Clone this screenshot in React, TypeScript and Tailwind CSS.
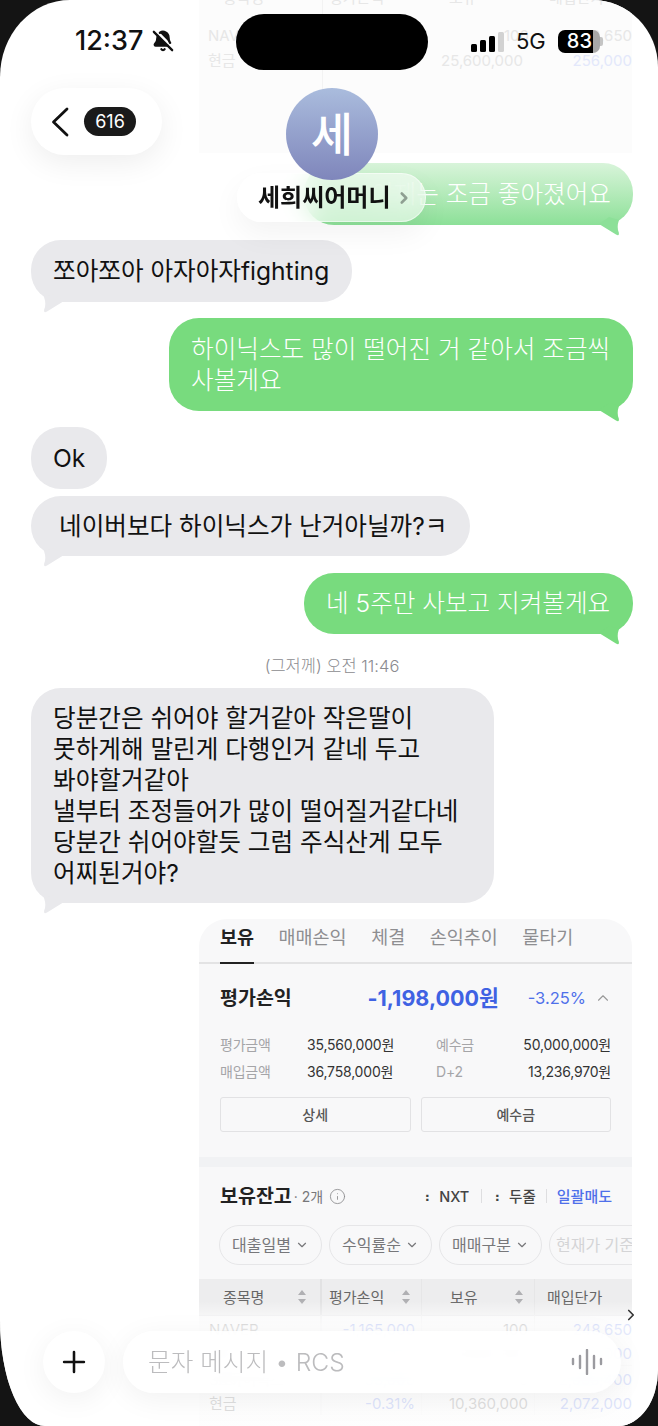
import React from 'react';
import { ChevronDown, ChevronRight, ChevronUp, Info, Plus, BellOff } from 'lucide-react';

const Tail: React.FC<{ side: 'left' | 'right'; color: string }> = ({ side, color }) => (
    <svg
        viewBox="0 0 22 19"
        className={side === 'right' ? 'absolute right-[12px] bottom-[-11px] w-[22px] h-[19px]' : 'absolute left-[11px] bottom-[-11px] w-[22px] h-[19px] -scale-x-100'}
        fill={color}
    >
        <path d="M0 7 L17 17.5 Q20.5 19.5 19.8 15.5 Q17.5 10 20 3 L10 0 Z" />
    </svg>
);

const Incoming: React.FC<{ children: React.ReactNode; className?: string; noTail?: boolean }> = ({ children, className = '', noTail }) => (
    <div className={`relative self-start rounded-[30px] bg-[#e9e9ec] px-[22px] text-[#111] ${className}`}>
        {children}
        {!noTail && <Tail side="left" color="#e9e9ec" />}
    </div>
);

const Outgoing: React.FC<{ children: React.ReactNode; className?: string }> = ({ children, className = '' }) => (
    <div className={`relative self-end rounded-[30px] bg-[#78db7e] px-[22px] text-white font-light ${className}`}>
        {children}
        <Tail side="right" color="#78db7e" />
    </div>
);

const SortIcon = () => (
    <svg viewBox="0 0 8 14" className="w-[8px] h-[14px]" fill="#b0b0b3">
        <path d="M4 0 L8 5 H0 Z M4 14 L0 9 H8 Z" />
    </svg>
);

const Pill: React.FC<{ label: string; className?: string }> = ({ label, className = '' }) => (
    <div className={`h-[40px] rounded-full border border-[#e6e6e8] flex items-center justify-center gap-[4px] text-[16px] text-[#77777a] shrink-0 whitespace-nowrap ${className}`}>
        {label}
        <ChevronDown size={14} strokeWidth={2} />
    </div>
);

const HoldingsCard = () => (
    <div className="self-end w-[433px] h-[560px] mt-[16px] mr-[1px] rounded-t-[28px] bg-[#f8f8f9] overflow-hidden text-[#333]">
        <div className="h-[45px] flex items-start gap-[24.5px] pl-[21px] pt-[3px] border-b-2 border-[#e3e3e4] text-[18.5px] text-[#8e8e91]">
            <div className="relative h-[42px] font-bold text-[#222]">
                보유
                <div className="absolute left-0 right-0 bottom-0 h-[2px] bg-[#222]" />
            </div>
            <span>매매손익</span>
            <span>체결</span>
            <span>손익추이</span>
            <span>물타기</span>
        </div>

        <div className="h-[203px] border-b-[10px] border-[#f1f2f4] px-[21px] pt-[19px]">
            <div className="flex items-center h-[30px]">
                <span className="text-[19.5px] font-bold text-[#222]">평가손익</span>
                <span className="ml-auto text-[21.5px] font-bold text-[#3f62e3]">-1,198,000원</span>
                <span className="ml-[29px] text-[16.5px] text-[#4f70ea]">-3.25%</span>
                <ChevronUp size={18} strokeWidth={1.5} className="ml-[8px] mr-[-1px] text-[#999]" />
            </div>
            <div className="mt-[18px] grid grid-cols-[87px_84px_45px_1fr] text-[14px] leading-[27px] tracking-[-0.2px] whitespace-nowrap">
                <span className="text-[#a5a5a8]">평가금액</span>
                <span className="text-right text-[#333]">35,560,000원</span>
                <span className="pl-[45px] w-[100px] text-[#a5a5a8]">예수금</span>
                <span className="text-right text-[#333]">50,000,000원</span>
                <span className="text-[#a5a5a8]">매입금액</span>
                <span className="text-right text-[#333]">36,758,000원</span>
                <span className="pl-[45px] w-[100px] text-[#a5a5a8]">D+2</span>
                <span className="text-right text-[#333]">13,236,970원</span>
            </div>
            <div className="mt-[12px] flex gap-[10px]">
                <div className="flex-1 h-[35px] rounded-[3px] border border-[#e2e2e4] flex items-center justify-center text-[14px] font-medium text-[#555]">상세</div>
                <div className="flex-1 h-[35px] rounded-[3px] border border-[#e2e2e4] flex items-center justify-center text-[14px] font-medium text-[#555]">예수금</div>
            </div>
        </div>

        <div className="flex items-center h-[30px] mt-[14px] pl-[21px] pr-[20px]">
            <span className="text-[19.5px] font-bold text-[#222]">보유잔고</span>
            <span className="ml-[2px] text-[14px] text-[#77777a]">· 2개</span>
            <Info size={17} strokeWidth={1.2} className="ml-[6px] text-[#8a8a8d]" />
            <span className="ml-auto text-[14.5px] font-medium text-[#444]">⠆ NXT</span>
            <span className="mx-[12px] h-[14px] w-px bg-[#dedee0]" />
            <span className="text-[14.5px] font-medium text-[#444]">⠆ 두줄</span>
            <span className="mx-[10px] h-[14px] w-px bg-[#dedee0]" />
            <span className="text-[15px] font-medium text-[#4f70ea]">일괄매도</span>
        </div>

        <div className="flex gap-[7px] mt-[14px] pl-[20px] overflow-hidden">
            <Pill label="대출일별" className="w-[103px]" />
            <Pill label="수익률순" className="w-[103px]" />
            <Pill label="매매구분" className="w-[103px]" />
            <Pill label="현재가 기준" className="w-[110px] text-[#d4d4d6]" />
        </div>

        <div className="mt-[14px] grid grid-cols-[123px_100px_113px_1fr] text-[15px]">
            <div className="h-[36px] bg-[#ededee] border-r-2 border-[#e2e2e3] flex items-center justify-between pl-[24px] pr-[14px] text-[#666]">종목명<SortIcon /></div>
            <div className="h-[36px] bg-[#ededee] border-r border-[#e6e6e7] flex items-center justify-between pl-[7px] pr-[11px] text-[#666]">평가손익<SortIcon /></div>
            <div className="h-[36px] bg-[#ededee] border-r border-[#e6e6e7] flex items-center justify-between pl-[28px] pr-[11px] text-[#666]">보유<SortIcon /></div>
            <div className="h-[36px] bg-[#ededee] flex items-center pl-[12px] text-[#666]">매입단가</div>

            <div className="h-[50px] border-r-2 border-[#eeeeef] border-t border-t-[#e8e8e9] pl-[10px] pt-[2px] leading-[24px] text-[#555]">NAVER<br />현금</div>
            <div className="h-[50px] border-r border-[#eeeeef] border-t border-t-[#e8e8e9] pr-[6px] pt-[2px] leading-[24px] text-right text-[#4f70ea]">-1,165,000<br />-3.25%</div>
            <div className="h-[50px] border-r border-[#eeeeef] border-t border-t-[#e8e8e9] pr-[6px] pt-[2px] leading-[24px] text-right text-[#555]">100<br />25,600,000</div>
            <div className="h-[50px] border-t border-t-[#e8e8e9] pt-[2px] leading-[24px] text-right text-[#4f70ea] whitespace-nowrap">248,650<br />256,000</div>

            <div className="h-[50px] border-r-2 border-[#eeeeef] border-t border-t-[#e8e8e9] pl-[10px] pt-[2px] leading-[24px] text-[#555]">SK하이닉스<br />현금</div>
            <div className="h-[50px] border-r border-[#eeeeef] border-t border-t-[#e8e8e9] pr-[6px] pt-[2px] leading-[24px] text-right text-[#4f70ea]">-33,000<br />-0.31%</div>
            <div className="h-[50px] border-r border-[#eeeeef] border-t border-t-[#e8e8e9] pr-[6px] pt-[2px] leading-[24px] text-right text-[#555]">5<br />10,360,000</div>
            <div className="h-[50px] border-t border-t-[#e8e8e9] pt-[2px] leading-[24px] text-right text-[#4f70ea] whitespace-nowrap">2,065,400<br />2,072,000</div>
        </div>
    </div>
);

export default function App() {
    return (
        <div className="w-[658px] h-[1426px] bg-[#141414] overflow-hidden" style={{ fontFamily: 'Inter, "Noto Sans CJK KR", sans-serif' }}>
            <div className="relative w-full h-full bg-white overflow-hidden rounded-[70px_66px_40px_45px/77px_67px_56px_106px]">

                {/* messages */}
                <div className="flex flex-col pt-[163px] pl-[31px] pr-[25px] text-[24.6px] leading-[31px]">
                    <div className="relative self-end w-[329px] h-[62px] rounded-[30px] bg-gradient-to-b from-[#d8f4da] to-[#8ce098] text-white font-light flex items-center justify-end pr-[22px]">
                        이제는 조금 좋아졌어요
                        <Tail side="right" color="#8ce098" />
                    </div>

                    <Incoming className="mt-[15px] py-[15.5px] w-[321px] whitespace-nowrap">쪼아쪼아 아자아자fighting</Incoming>

                    <Outgoing className="mt-[16px] py-[15.5px] w-[464px] whitespace-nowrap">
                        하이닉스도 많이 떨어진 거 같아서 조금씩<br />사볼게요
                    </Outgoing>

                    <Incoming noTail className="mt-[16px] py-[15.5px] w-[76px]">Ok</Incoming>
                    <Incoming className="mt-[7px] py-[14.5px] w-[439px] pl-[28px] whitespace-nowrap">네이버보다 하이닉스가 난거아닐까?ㅋ</Incoming>

                    <Outgoing className="mt-[17px] py-[15px] w-[329px] whitespace-nowrap">네 5주만 사보고 지켜볼게요</Outgoing>

                    <div className="mt-[22px] h-[20px] text-center text-[16.5px] leading-[20px] font-light text-[#8b8b8f]">(그저께) 오전 11:46</div>

                    <Incoming className="mt-[12px] py-[14.5px] w-[463px] whitespace-nowrap">
                        당분간은 쉬어야 할거같아 작은딸이<br />
                        못하게해 말린게 다행인거 같네 두고<br />
                        봐야할거같아<br />
                        낼부터 조정들어가 많이 떨어질거같다네<br />
                        당분간 쉬어야할듯 그럼 주식산게 모두<br />
                        어찌된거야?
                    </Incoming>

                    <HoldingsCard />
                </div>

                {/* top: ghost of the previous picture and status bar */}
                <div className="absolute top-0 left-[199px] w-[433px] h-[153px] bg-[#fcfcfc] text-[15px] text-[#e7e7e7] overflow-hidden">
                    <div className="absolute left-[123px] top-0 h-[150px] w-px bg-[#f3f3f3]" />
                    <div className="absolute left-[24px] top-[-13px]">종목명</div>
                    <div className="absolute left-[130px] top-[-13px]">평가손익</div>
                    <div className="absolute left-[250px] top-[-13px]">보유</div>
                    <div className="absolute left-[350px] top-[-13px]">매입단가</div>
                    <div className="absolute left-[9px] top-[25px]">NAVER</div>
                    <div className="absolute left-[9px] top-[50px]">현금</div>
                    <div className="absolute right-[103px] top-[25px]">100</div>
                    <div className="absolute right-[109px] top-[50px]">25,600,000</div>
                    <div className="absolute right-0 top-[25px]">248,650</div>
                    <div className="absolute right-0 top-[50px] text-[#e3e8fb]">256,000</div>
                </div>

                <div className="absolute top-[14px] left-[236px] w-[192px] h-[56px] rounded-full bg-black" />

                <div className="absolute top-[24px] left-[75px] flex items-center gap-[9px] text-[#111]">
                    <span className="text-[27px] leading-[34px] font-medium">12:37</span>
                    <BellOff size={22} strokeWidth={2.5} fill="#111" />
                </div>

                <div className="absolute top-[29px] left-[471px] flex items-center text-[#111]">
                    <div className="flex items-end gap-[3px] h-[22px]">
                        <div className="w-[6px] h-[8px] rounded-[1.5px] bg-black" />
                        <div className="w-[6px] h-[12px] rounded-[1.5px] bg-black" />
                        <div className="w-[6px] h-[16px] rounded-[1.5px] bg-black" />
                        <div className="w-[6px] h-[20px] rounded-[1.5px] bg-[#d2d2d2]" />
                    </div>
                    <span className="ml-[12px] text-[22px] leading-[24px]">5G</span>
                    <div className="ml-[12px] flex items-center">
                        <div className="w-[42px] h-[23px] rounded-[7px] bg-[linear-gradient(90deg,#000_83%,#a8a8a8_83%)] text-white text-[20px] leading-[23px] font-medium pl-[9px]">83</div>
                        <div className="w-[3px] h-[9px] rounded-r-[2px] bg-[#c4c4c4]" />
                    </div>
                </div>

                {/* floating header */}
                <div className="absolute top-[88px] left-[31px] w-[131px] h-[67px] rounded-full bg-white shadow-[0_8px_30px_rgba(0,0,0,0.07)] flex items-center pl-[20px]">
                    <svg viewBox="0 0 18 30" className="w-[18px] h-[30px]" fill="none" stroke="#111" strokeWidth="2.8" strokeLinecap="round" strokeLinejoin="round">
                        <path d="M16 2 L2.5 15 L16 28" />
                    </svg>
                    <div className="ml-[15px] w-[52px] h-[29px] rounded-full bg-[#1a1a1a] text-white text-[18px] leading-[29px] text-center">616</div>
                </div>

                <div className="absolute top-[173px] left-[237px] w-[189px] h-[49px] rounded-full bg-white/55 backdrop-blur-md border border-white/50 shadow-[0_12px_30px_rgba(0,0,0,0.05)] flex items-center pl-[20px] text-[24px] font-bold text-[#111] whitespace-nowrap">
                    세희씨어머니
                    <ChevronRight size={18} strokeWidth={3.5} className="ml-[5px] text-[#8f9f92]" />
                </div>

                <div className="absolute top-[88px] left-[286px] w-[92px] h-[92px] rounded-full bg-gradient-to-b from-[#aabcdd] to-[#7f86bb] flex items-center justify-center text-[46px] font-medium text-white">세</div>

                {/* bottom bar */}
                <div className="absolute left-0 right-0 bottom-0 h-[125px] bg-gradient-to-b from-white/0 via-white/85 via-[20%] to-white/80" />

                <div className="absolute left-[43px] top-[1331px] w-[62px] h-[62px] rounded-full bg-white shadow-[0_6px_30px_rgba(0,0,0,0.06)] flex items-center justify-center">
                    <Plus size={34} strokeWidth={1.8} className="text-[#111]" />
                </div>

                <div className="absolute left-[123px] top-[1331px] w-[498px] h-[62px] rounded-full bg-white/85 backdrop-blur-sm shadow-[0_6px_30px_rgba(0,0,0,0.06)] flex items-center pl-[25px] pr-[18px] text-[24.6px] text-[#bcbcbe] font-light">
                    문자 메시지 • RCS
                    <svg viewBox="0 0 32 26" className="ml-auto w-[32px] h-[26px]" stroke="#9b9ba0" strokeWidth="2.4" strokeLinecap="round">
                        <path d="M2 10v5M9 7v12M16 1v24M23 7v12M30 10v5" />
                    </svg>
                </div>

                <ChevronRight size={18} strokeWidth={2.2} className="absolute left-[622px] top-[1306px] text-[#333]" />
            </div>
        </div>
    );
}
